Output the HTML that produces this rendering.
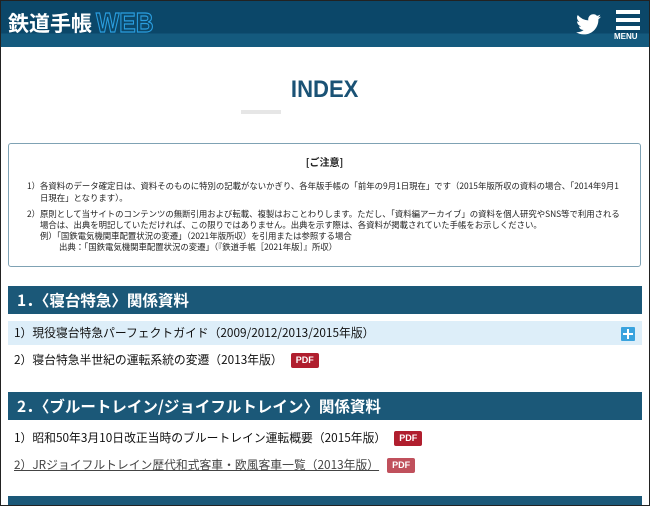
<!DOCTYPE html>
<html><head><meta charset="utf-8"><style>
*{margin:0;padding:0;box-sizing:border-box}
html,body{width:650px;height:506px;overflow:hidden}
body{background:#fff;font-family:"Liberation Sans","Noto Sans CJK JP",sans-serif;position:relative}
.frame{position:absolute;left:0;top:0;width:650px;height:506px;border:1px solid #222;z-index:9;pointer-events:none}
.hdr{position:absolute;left:0;top:0;width:650px;height:47px;background:linear-gradient(#0b4769 0,#0b4769 33px,#145a7e 34px,#145a7e 47px)}
.logo{position:absolute;left:8px;top:8px;color:#fff;font-size:21px;font-weight:bold;letter-spacing:0;font-family:"Noto Sans CJK JP",sans-serif;line-height:30px}
.web{position:absolute;left:96px;top:6px;font-size:28px;font-weight:bold;color:transparent;-webkit-text-stroke:1.2px #2a9ee0;font-family:"Liberation Sans",sans-serif;letter-spacing:0;line-height:34px;transform:scaleX(0.88);transform-origin:left}
.menu{position:absolute;left:616px;top:10px;width:24px}
.menu i{display:block;height:4px;background:#fff;margin-bottom:4px}
.menu span{position:absolute;top:22px;left:-2px;color:#fff;font-size:8px;font-weight:bold}
.idx{position:absolute;top:76px;left:0;width:650px;text-align:center;font-size:24px;font-weight:bold;color:#1a5275;font-family:"Liberation Sans",sans-serif}
.idx span{display:inline-block;transform:scaleX(0.92)}
.bar{position:absolute;left:241px;top:110px;width:40px;height:4px;background:#e6e6e6}
.note{position:absolute;left:8px;top:143px;width:633px;height:124px;border:1px solid #7fa2b4;border-radius:3px;font-size:8.4px;color:#222;font-family:"Noto Sans CJK JP",sans-serif;line-height:12px}
.note p{position:absolute;white-space:nowrap}
.sec{position:absolute;left:8px;width:634px;height:28px;background:#1b5878;color:#fff;font-size:15.5px;font-weight:bold;padding-left:9px;line-height:28px;font-family:"Noto Sans CJK JP",sans-serif}
.it{position:absolute;left:14px;font-size:11.8px;color:#111;font-family:"Noto Sans CJK JP",sans-serif;white-space:nowrap;line-height:16px}
.pdf{display:inline-block;background:#b01e2e;color:#fff;font-size:9px;font-weight:bold;padding:0 5px;height:15px;line-height:15px;border-radius:2px;vertical-align:middle;margin-left:8px;font-family:"Liberation Sans",sans-serif}
</style></head><body>
<div class="frame"></div>
<div class="hdr">
<div class="logo">鉄道手帳</div><div class="web">WEB</div>
<svg style="position:absolute;left:576px;top:14px" width="25" height="21" viewBox="0 0 24 20"><path fill="#fff" d="M24 2.4a9.8 9.8 0 0 1-2.8.8A4.9 4.9 0 0 0 23.3.5a9.9 9.9 0 0 1-3.1 1.2A4.9 4.9 0 0 0 11.8 6 14 14 0 0 1 1.7.9a4.9 4.9 0 0 0 1.5 6.6A4.9 4.9 0 0 1 1 6.9a4.9 4.9 0 0 0 3.9 4.9 4.9 4.9 0 0 1-2.2.1 4.9 4.9 0 0 0 4.6 3.4A9.9 9.9 0 0 1 0 17.300 14 14 0 0 0 7.5 19.5c9.1 0 14-7.5 14-14v-.6A10 10 0 0 0 24 2.4z"/></svg>
<div class="menu"><i></i><i></i><i></i><span>MENU</span></div>
</div>
<div class="idx"><span>INDEX</span></div><div class="bar"></div>
<div class="note">
<p style="top:12px;left:0;width:631px;text-align:center;font-weight:bold;font-size:10px">[ご注意]</p>
<p style="top:36px;left:18px">1）各資料のデータ確定日は、資料そのものに特別の記載がないかぎり、各年版手帳の「前年の9月1日現在」です（2015年版所収の資料の場合、「2014年9月1</p>
<p style="top:48px;left:31px">日現在」となります）。</p>
<p style="top:64px;left:18px">2）原則として当サイトのコンテンツの無断引用および転載、複製はおことわりします。ただし、「資料編アーカイブ」の資料を個人研究やSNS等で利用される</p>
<p style="top:75px;left:31px">場合は、出典を明記していただければ、この限りではありません。出典を示す際は、各資料が掲載されていた手帳をお示しください。</p>
<p style="top:86px;left:31px">例）「国鉄電気機関車配置状況の変遷」（2021年版所収）を引用または参照する場合</p>
<p style="top:97px;left:50px">出典：「国鉄電気機関車配置状況の変遷」（『鉄道手帳［2021年版］』所収）</p>
</div>
<div class="sec" style="top:286px">1．〈寝台特急〉関係資料</div>
<div style="position:absolute;left:8px;top:321px;width:634px;height:24px;background:#ddeef9"></div>
<div class="it" style="top:325px">1）現役寝台特急パーフェクトガイド（2009/2012/2013/2015年版）</div>
<div style="position:absolute;left:621px;top:327px;width:14px;height:14px;background:#3aa3de;border-radius:1px"><div style="position:absolute;left:6px;top:2px;width:2px;height:10px;background:#fff"></div><div style="position:absolute;left:2px;top:6px;width:10px;height:2px;background:#fff"></div></div>
<div class="it" style="top:352px">2）寝台特急半世紀の運転系統の変遷（2013年版）<span class="pdf">PDF</span></div>
<div class="sec" style="top:392px">2．〈ブルートレイン/ジョイフルトレイン〉関係資料</div>
<div class="it" style="top:430px">1）昭和50年3月10日改正当時のブルートレイン運転概要（2015年版）<span class="pdf">PDF</span></div>
<div class="it" style="top:457px;color:#444"><span style="text-decoration:underline">2）JRジョイフルトレイン歴代和式客車・欧風客車一覧（2013年版）</span><span class="pdf" style="background:#c0505c">PDF</span></div>
<div class="sec" style="top:496px"></div>
</body></html>
